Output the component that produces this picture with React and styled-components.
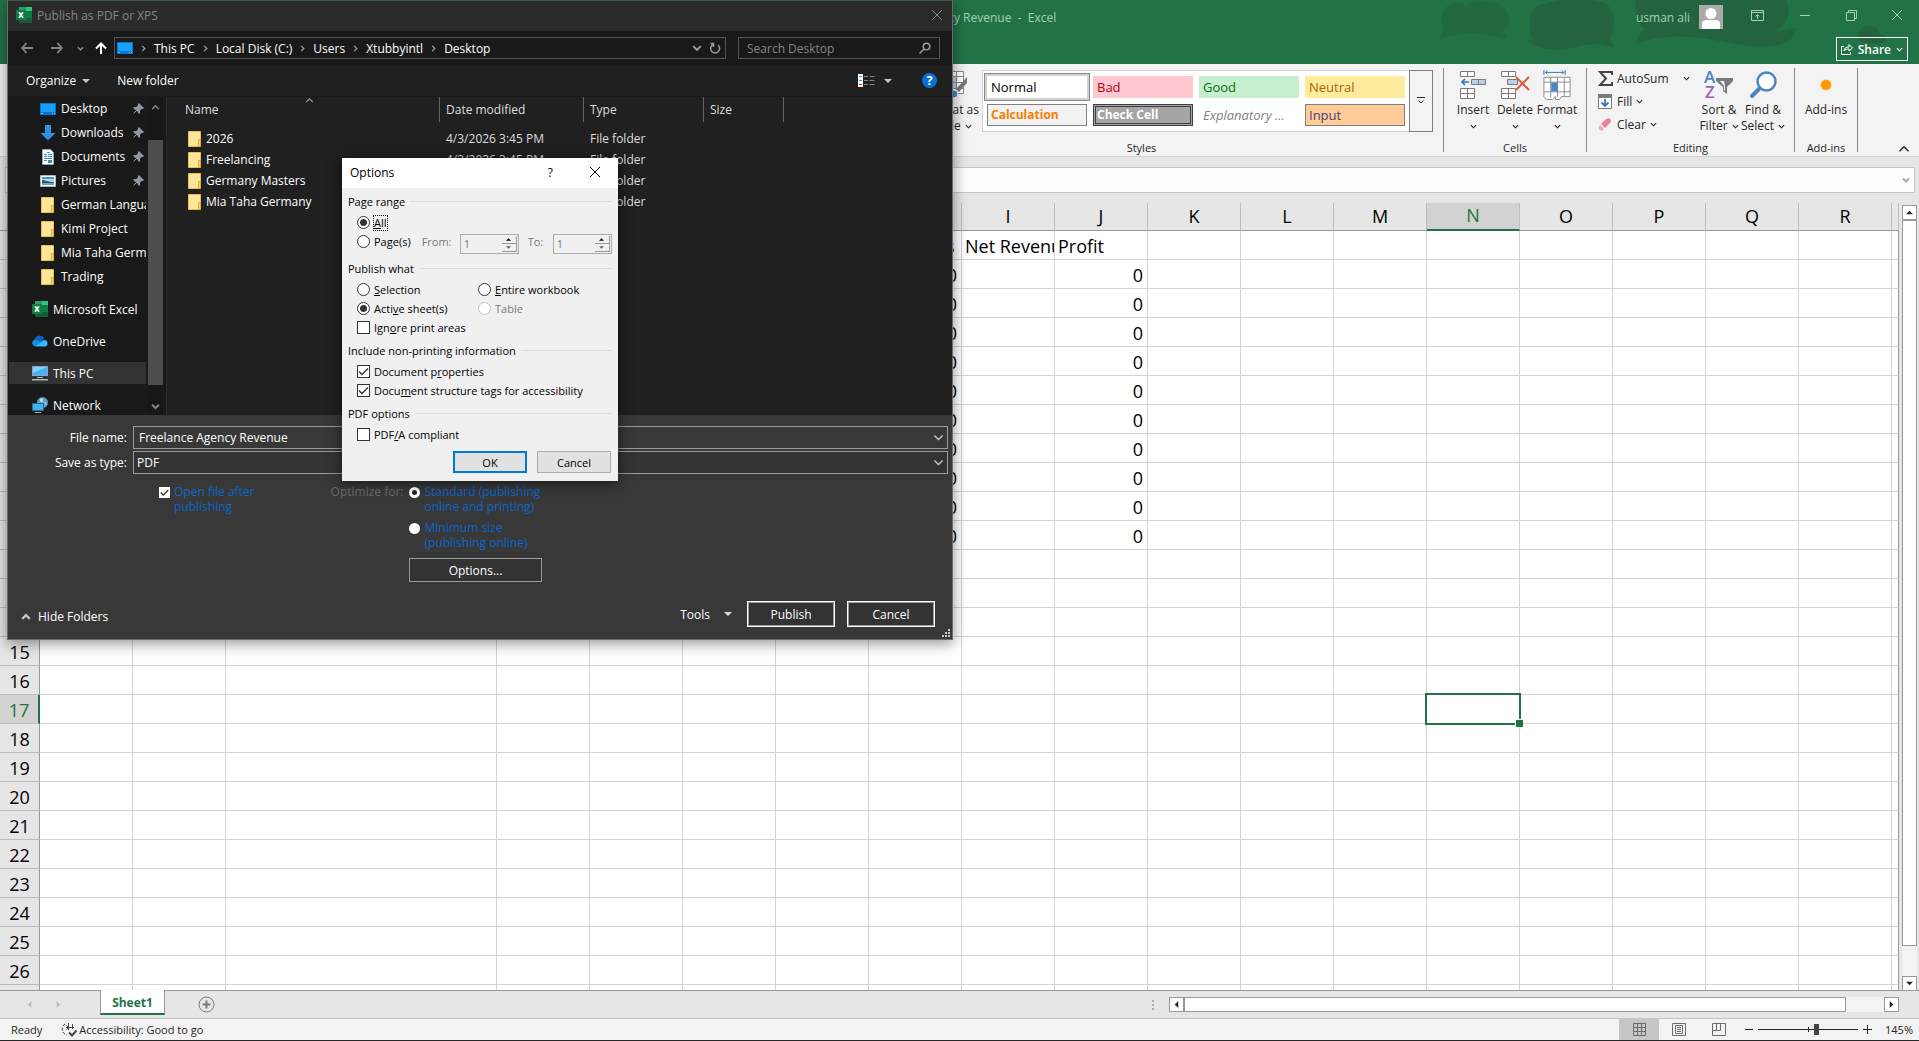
import React, { useState } from 'react';
import styled, { createGlobalStyle, css } from 'styled-components';

const GlobalStyle=createGlobalStyle`
    *{
        box-sizing: border-box;
    }
    body{
        margin: 0;
        overflow: hidden;
        font-family: "Open Sans", "Noto Sans", sans-serif;
        font-size: 12px;
        color: #262626;
    }
    button, input, select{
        font: inherit;
        color: inherit;
        margin: 0;
        padding: 0;
        border: none;
        border-radius: 0;
        background: none;
        outline: none;
    }
    svg{
        display: block;
        flex: none;
    }
`

/* ---------- workbook window ---------- */

const Page=styled.div`
    display: flex;
    flex-direction: column;
    height: 100vh;
    background-color: #e6e6e6;
`
const TitleBar=styled.header`
    position: relative;
    display: grid;
    grid-template-columns: 1fr auto 1fr;
    grid-template-rows: 34px 30px;
    background-color: #217346;
    color: #a6cfb5;
    white-space: pre;
`
const Clouds=styled.svg`
    position: absolute;
    right: 0;
    top: 0;
`
const DocTitle=styled.div`
    grid-column: 2;
    line-height: 36px;
`
const Account=styled.div`
    position: relative;
    display: flex;
    justify-content: flex-end;
    align-items: center;
    padding-right: 17px;
`
const Avatar=styled.svg`
    margin: 0 28px 0 9px;
`
const WindowButtons=styled.div`
    display: flex;
    gap: 35px;
    padding-bottom: 4px;
`
const IconButton=styled.button`
    display: flex;
    align-items: center;
    justify-content: center;
`
const ShareRow=styled.div`
    position: relative;
    grid-column: 3;
    display: flex;
    justify-content: flex-end;
    padding: 3px 11px;
`
const ShareButton=styled.button`
    display: flex;
    align-items: center;
    gap: 5px;
    height: 24px;
    padding: 0 4px;
    border: 1px solid white;
    color: white;
    font-weight: 600;
`
const Ribbon=styled.div`
    display: flex;
    justify-content: flex-end;
    height: 93px;
    padding: 4px 9px 4px 0;
    background-color: #f3f3f3;
    border-bottom: 1px solid #d2d2d2;
`
const Group=styled.section`
    display: flex;
    flex-direction: column;
    justify-content: space-between;
    width: ${p=>p.$width}px;
    border-right: 1px solid #8a8a8a;
`
const GroupBody=styled.div`
    display: flex;
    justify-content: ${p=>p.$align || 'center'};
    padding: ${p=>p.$pad || '0'};
`
const GroupLabel=styled.div`
    text-align: center;
    font-size: 11px;
    line-height: 14px;
    margin-bottom: -3px;
`
const BigButton=styled.button`
    display: flex;
    flex-direction: column;
    align-items: center;
    width: ${p=>p.$width || 42}px;
    line-height: 16px;
    white-space: nowrap;
    svg.big{
        margin: 2px 0;
    }
    span{
        display: flex;
        align-items: center;
        gap: 4px;
        min-height: 16px;
    }
`
const SmallButtons=styled.div`
    display: flex;
    flex-direction: column;
    width: 92px;
    margin-right: 7px;
`
const SmallButton=styled.button`
    display: flex;
    align-items: center;
    gap: 4px;
    height: 23px;
    padding-bottom: 2px;
    svg:last-child{
        margin-left: ${p=>p.$wide ? 'auto' : '0'};
    }
`
const Gallery=styled.div`
    display: flex;
    height: 62px;
    margin-top: 2px;
    background-color: white;
    border: 1px solid #d2d2d2;
    border-right: none;
`
const Swatches=styled.div`
    display: grid;
    grid-template-columns: repeat(4, 100px);
    grid-auto-rows: 22px;
    gap: 6px;
    padding: 5px 4px;
`
const Swatch=styled.button`
    padding: 0 0 1px 3px;
    text-align: left;
    font-size: 13px;
    line-height: 18px;
    white-space: nowrap;
    color: ${p=>p.$color};
    background-color: ${p=>p.$bg};
    border: 1px solid ${p=>p.$edge || p.$bg};
    ${p=>p.$bold && css`
        font-weight: 700;
        font-size: 12px;
    `}
    ${p=>p.$italic && css`
        font-style: italic;
    `}
    ${p=>p.$double && css`
        border: 3px double #3f3f3f;
        padding-left: 1px;
        line-height: 14px;
    `}
    ${p=>p.$selected && css`
        box-shadow: 0 0 0 2px #d2d2d2, 0 0 0 3px #8a8a8a;
    `}
`
const GalleryMore=styled.button`
    display: flex;
    align-items: center;
    justify-content: center;
    width: 24px;
    margin: -1px 0;
    border: 1px solid #7f7f7f;
    background-color: #f3f3f3;
`
const Collapse=styled.button`
    align-self: flex-end;
    width: 52px;
    display: flex;
    justify-content: flex-end;
    margin-bottom: -3px;
`
const FormulaRow=styled.div`
    display: flex;
    height: 46px;
    padding: 10px 4px;
`
const FormulaBox=styled.div`
    display: flex;
    align-items: center;
    flex: 1;
    margin-left: 1px;
    padding-right: 4px;
    background-color: #fdfdfd;
    border: 1px solid #c6c6c6;
    input{
        flex: 1;
    }
`
const GridArea=styled.div`
    display: flex;
    flex: 1;
    min-height: 0;
`
const SheetBox=styled.div`
    position: relative;
    flex: 1;
    min-width: 0;
    overflow: hidden;
`
const Sheet=styled.table`
    width: 100%;
    table-layout: fixed;
    border-collapse: separate;
    border-spacing: 0;
    font-size: 18px;
    color: black;
`
const ColHead=styled.th`
    height: 28px;
    padding: 0 0 2px;
    font-weight: 400;
    line-height: 24px;
    color: ${p=>p.$active ? '#217346' : 'black'};
    background-color: ${p=>p.$active ? '#d2d2d2' : '#e6e6e6'};
    border-right: 1px solid #bdbdbd;
    border-bottom: ${p=>p.$active ? '2px solid #217346' : '1px solid #999999'};
`
const RowHead=styled.th`
    height: 29px;
    padding: 2px 0 0;
    font-weight: 400;
    line-height: 26px;
    color: ${p=>p.$active ? '#217346' : 'black'};
    background-color: ${p=>p.$active ? '#d2d2d2' : '#e6e6e6'};
    border-right: ${p=>p.$active ? '2px solid #217346' : '1px solid #999999'};
    border-bottom: 1px solid #bdbdbd;
`
const Cell=styled.td`
    position: relative;
    height: 29px;
    padding: 2px 4px 0 3px;
    line-height: 26px;
    white-space: nowrap;
    overflow: ${p=>p.$selected ? 'visible' : 'hidden'};
    text-align: ${p=>p.$number ? 'right' : 'left'};
    background-color: white;
    border-right: 1px solid #d4d4d4;
    border-bottom: 1px solid #d4d4d4;
    &:last-child{
        border-right-color: #999999;
    }
    ${p=>p.$selected && css`
        z-index: 1;
        &::before{
            content: '';
            position: absolute;
            inset: -2px;
            border: 2px solid #217346;
        }
        &::after{
            content: '';
            position: absolute;
            right: -4px;
            bottom: -4px;
            width: 7px;
            height: 7px;
            border: 1px solid white;
            border-width: 1px 0 0 1px;
            background-color: #217346;
        }
    `}
`
const VScroll=styled.div`
    display: flex;
    flex-direction: column;
    width: 15px;
    margin: 2px 2px -1px 3px;
    background-color: #f3f3f3;
`
const VThumb=styled.div`
    flex: 726;
    background-color: white;
    border: 1px solid #999999;
`
const VRest=styled.div`
    flex: 30;
`
const ScrollButton=styled.button`
    display: flex;
    align-items: center;
    justify-content: center;
    width: 15px;
    height: 15px;
    background-color: white;
    border: 1px solid #999999;
`
const TabBar=styled.div`
    display: flex;
    align-items: center;
    height: 28px;
    padding-right: 20px;
    border-top: 1px solid #999999;
`
const TabArrows=styled.div`
    display: flex;
    gap: 22px;
    width: 100px;
    padding-left: 26px;
`
const Tab=styled.button`
    align-self: flex-start;
    width: 65px;
    height: 25px;
    margin: -1px 33px 0 0;
    padding-top: 2px;
    background-color: white;
    border: 1px solid #999999;
    border-top: none;
    border-bottom: 2px solid #217346;
    color: #217346;
    font-weight: 700;
`
const Dots=styled.div`
    display: grid;
    gap: 2px;
    margin: 0 15px 0 auto;
    i{
        width: 2px;
        height: 2px;
        background-color: #ababab;
    }
`
const HScroll=styled.div`
    display: flex;
    width: 730px;
    height: 15px;
    background-color: #f3f3f3;
`
const HThumb=styled.div`
    flex: 662;
    background-color: white;
    border: 1px solid #999999;
`
const HRest=styled.div`
    flex: 38;
`
const StatusBar=styled.footer`
    display: flex;
    align-items: center;
    height: 23px;
    padding: 0 6px 0 11px;
    font-size: 11px;
    background-color: #f3f3f3;
    border-top: 1px solid #c6c6c6;
    border-bottom: 1px solid #262626;
`
const Accessibility=styled.div`
    display: flex;
    align-items: center;
    gap: 2px;
    margin: 0 auto 0 19px;
`
const ViewButton=styled.button`
    display: flex;
    align-items: center;
    justify-content: center;
    width: 40px;
    height: 21px;
    background-color: ${p=>p.$active ? '#c6c6c6' : 'transparent'};
`
const Zoom=styled.div`
    display: flex;
    align-items: center;
    gap: 5px;
    margin: 0 13px 0 6px;
    input{
        appearance: none;
        width: 100px;
        height: 11px;
        background: linear-gradient(#262626, #262626) 50px 3px / 1px 5px no-repeat,
            linear-gradient(#262626, #262626) 0 5px / 100% 1px no-repeat;
    }
    input::-webkit-slider-thumb{
        appearance: none;
        width: 5px;
        height: 11px;
        background-color: #444444;
    }
`

/* ---------- publish dialog ---------- */

const Publish=styled.div`
    position: absolute;
    left: 7px;
    top: 0;
    width: 946px;
    display: flex;
    flex-direction: column;
    border: 1px solid #6b6b6b;
    border-top-color: #3b5a49;
    background-color: #383838;
    color: white;
    box-shadow: 0 3px 14px rgba(0, 0, 0, 0.45);
`
const DialogTitle=styled.div`
    display: flex;
    align-items: center;
    gap: 5px;
    height: 30px;
    padding: 0 10px 2px 8px;
    background-color: #2b2b2b;
    color: #858585;
    button{
        margin-left: auto;
    }
`
const NavRow=styled.div`
    display: flex;
    align-items: center;
    height: 35px;
    padding: 0 12px 1px;
    background-color: #191919;
`
const NavButtons=styled.div`
    display: grid;
    grid-template-columns: 30px 26px 18px 20px;
    align-items: center;
    justify-items: start;
    padding-left: 1px;
    margin-right: -1px;
`
const Address=styled.div`
    display: flex;
    align-items: center;
    flex: 1;
    height: 22px;
    gap: 7px;
    padding: 0 4px 0 2px;
    border: 1px solid #535353;
    a{
        color: white;
        text-decoration: none;
    }
    .drop{
        margin-left: auto;
    }
`
const Search=styled.label`
    display: flex;
    align-items: center;
    width: 202px;
    height: 22px;
    margin-left: 12px;
    padding: 0 8px;
    border: 1px solid #535353;
    input{
        flex: 1;
        min-width: 0;
    }
    input::placeholder{
        color: #858585;
    }
`
const Commands=styled.div`
    display: flex;
    align-items: center;
    height: 31px;
    padding: 0 15px 1px 18px;
    background-color: #202020;
    border-bottom: 1px solid #191919;
`
const Command=styled.button`
    display: flex;
    align-items: center;
    gap: ${p=>p.$inner || 6}px;
    margin-right: ${p=>p.$push ? 'auto' : `${p.$gap || 0}px`};
`
const Browser=styled.div`
    display: flex;
    height: 318px;
    background-color: #202020;
`
const Sidebar=styled.nav`
    display: flex;
    gap: 2px;
    width: 159px;
    overflow: hidden;
    background-color: #191919;
    border-right: 1px solid #2b2b2b;
`
const Places=styled.div`
    width: 138px;
    overflow: hidden;
    padding-left: 1px;
    a{
        display: flex;
        align-items: center;
        gap: 5px;
        height: 24px;
        padding: 0 0 1px 31px;
        color: white;
        white-space: nowrap;
        text-decoration: none;
    }
    a svg:first-child{
        width: 16px;
    }
    a svg:nth-of-type(2){
        margin-left: auto;
        margin-right: 2px;
    }
`
const Roots=styled.div`
    display: grid;
    gap: 10px;
    margin-top: 9px;
    a{
        height: 22px;
        padding: 0 0 0 23px;
    }
    a.current{
        background-color: #333333;
    }
`
const SideScroll=styled.div`
    display: flex;
    flex-direction: column;
    align-items: center;
    width: 15px;
    padding: 6px 0 4px;
    background-color: #171717;
`
const SideThumb=styled.div`
    width: 15px;
    height: 245px;
    margin-top: 28px;
    margin-bottom: auto;
    background-color: #4d4d4d;
`
const FileTable=styled.table`
    table-layout: fixed;
    width: 618px;
    align-self: flex-start;
    margin-left: -1px;
    border-spacing: 0;
    color: #dedede;
    thead th{
        position: relative;
        height: 25px;
        padding: 0 0 0 6px;
        font-weight: 400;
        text-align: left;
        border-right: 1px solid #636363;
    }
    thead th:first-child{
        padding-left: 19px;
    }
    thead svg{
        position: absolute;
        left: 139px;
        top: -1px;
    }
    tbody::before{
        content: '';
        display: block;
        height: 6px;
    }
    td{
        height: 21px;
        padding: 0 0 0 6px;
        white-space: nowrap;
    }
    td:first-child{
        padding-left: 21px;
        color: white;
    }
`
const FileName=styled.span`
    display: flex;
    align-items: center;
    gap: 3px;
`
const SaveFields=styled.div`
    display: grid;
    grid-template-columns: 119px 1fr;
    gap: 2px 6px;
    padding: 11px 4px 0 0;
    align-items: center;
    >label{
        text-align: right;
    }
`
const SaveField=styled.div`
    display: flex;
    align-items: center;
    height: 23px;
    padding-right: 3px;
    border: 1px solid #9b9b9b;
    background-color: ${p=>p.$dark ? '#333333' : '#383838'};
    input, select{
        flex: 1;
        appearance: none;
        padding-left: ${p=>p.$dark ? 3 : 5}px;
    }
`
const PublishOptions=styled.div`
    display: flex;
    height: 84px;
    padding: 10px 0 0 151px;
    line-height: 15px;
    color: #0a66cc;
    label{
        display: flex;
        gap: 4px;
    }
    input{
        flex: none;
        appearance: none;
        width: 11px;
        height: 11px;
        margin-top: 3px;
        background-color: white;
    }
    input[type=radio]{
        border-radius: 50%;
    }
    input[type=radio]:checked{
        border: 3px solid white;
        background-color: #262626;
    }
`
const TickBox=styled.span`
    display: grid;
    height: 15px;
    svg, input{
        grid-area: 1 / 1;
    }
    svg{
        position: relative;
        margin-top: 3px;
        pointer-events: none;
    }
`
const OptimizeLabel=styled.span`
    width: 74px;
    margin-left: 75px;
    margin-right: 6px;
    text-align: right;
    white-space: nowrap;
    color: #6b6b6b;
`
const OptimizeChoices=styled.div`
    display: grid;
    gap: 6px;
    align-content: start;
`
const DarkButton=styled.button`
    width: ${p=>p.$width}px;
    height: ${p=>p.$height}px;
    background-color: #333333;
    border: 1px solid ${p=>p.$strong ? 'white' : '#9b9b9b'};
    box-shadow: ${p=>p.$strong ? 'inset 0 0 0 1px #9b9b9b' : 'none'};
`
const OptionsRow=styled.div`
    display: flex;
    padding-left: 401px;
`
const PublishFooter=styled.div`
    display: flex;
    align-items: center;
    padding: 19px 17px 12px 13px;
    .hide{
        margin-right: auto;
        padding-top: 5px;
    }
`
const Grip=styled.svg`
    position: absolute;
    right: 2px;
    bottom: 2px;
`

/* ---------- options dialog ---------- */

const Options=styled.div`
    position: absolute;
    left: 342px;
    top: 158px;
    width: 276px;
    font-size: 11px;
    color: black;
    background-color: #f0f0f0;
    box-shadow: 0 2px 12px rgba(0, 0, 0, 0.6);
`
const OptionsTitle=styled.div`
    display: flex;
    align-items: center;
    height: 30px;
    padding: 0 18px 2px 8px;
    font-size: 12px;
    background-color: white;
    span{
        margin-right: auto;
    }
    button+button{
        margin-left: 37px;
    }
`
const OptionsBody=styled.div`
    padding: 3px 6px 8px;
`
const Section=styled.section`
    margin-bottom: ${p=>p.$gap || 3}px;
`
const SectionTitle=styled.div`
    display: flex;
    align-items: center;
    gap: 5px;
    height: 22px;
    padding-bottom: 1px;
    &::after{
        content: '';
        flex: 1;
        border-top: 1px solid #dcdcdc;
    }
`
const Choices=styled.div`
    display: grid;
    grid-template-columns: ${p=>p.$two ? '121px 1fr' : '1fr'};
    padding-left: 9px;
`
const Choice=styled.label`
    display: flex;
    align-items: center;
    gap: 4px;
    height: 19px;
    white-space: nowrap;
    color: ${p=>p.$off ? '#7a7a7a' : 'black'};
    input{
        appearance: none;
        grid-area: 1 / 1;
        width: 13px;
        height: 13px;
        background-color: white;
        border: 1px solid ${p=>p.$off ? '#c6c6c6' : '#333333'};
    }
    input[type=radio]{
        border-radius: 50%;
    }
    input[type=radio]:checked{
        background: radial-gradient(circle, #333333 3px, white 4px);
    }
    >span.focus{
        outline: 1px dotted black;
        line-height: 14px;
    }
`
const CheckWrap=styled.span`
    display: grid;
    svg{
        grid-area: 1 / 1;
        pointer-events: none;
    }
`
const PageRow=styled.div`
    display: flex;
    align-items: center;
    height: 19px;
    color: #7a7a7a;
`
const PageLabel=styled.label`
    margin-left: ${p=>p.$gap}px;
    width: ${p=>p.$width}px;
    flex: none;
`
const Spin=styled.div`
    display: flex;
    flex: none;
    width: 59px;
    height: 20px;
    margin-top: 4px;
    padding: 1px;
    border: 1px solid #ababab;
    background-color: #f0f0f0;
    input{
        flex: 1;
        min-width: 0;
        padding-left: 2px;
    }
`
const SpinButtons=styled.div`
    display: grid;
    grid-template-rows: 8px 8px;
    width: 15px;
    button{
        display: flex;
        align-items: center;
        justify-content: center;
        border-right: 1px solid #999999;
        border-bottom: 1px solid #999999;
    }
`
const OptionsButtons=styled.div`
    display: flex;
    justify-content: flex-end;
    gap: 10px;
    margin-top: 7px;
    padding-right: 1px;
`
const LightButton=styled.button`
    width: 74px;
    height: 22px;
    background-color: #e1e1e1;
    border: ${p=>p.$primary ? '2px solid #0078d7' : '1px solid #adadad'};
`

/* ---------- icons ---------- */

const Chevron=({ size=7, color='currentColor', dir='down', width=1.3, className })=>(
    <svg className={className} width={size} height={size} viewBox="0 0 8 8" fill="none" stroke={color} strokeWidth={width}
        transform={`rotate(${{ down: 0, up: 180, left: 90, right: -90 }[dir]})`}>
        <path d="M1 2.5l3 3 3-3" />
    </svg>
)
const Triangle=({ w=10, color='#262626', dir='down' })=>(
    <svg width={w} height={w} viewBox="0 0 10 10" fill={color} transform={`rotate(${{ down: 0, up: 180, left: 90, right: -90 }[dir]})`}>
        <path d="M0 2.5h10l-5 5z" />
    </svg>
)
const Cross=({ size=10, color='currentColor' })=>(
    <svg width={size} height={size} viewBox="0 0 10 10" stroke={color}>
        <path d="M0 0l10 10M10 0L0 10" />
    </svg>
)
const Tick=({ size })=>(
    <svg width={size} height={size} viewBox="0 0 13 13" fill="none" stroke="#333333" strokeWidth="1.4">
        <path d="M2 6.5l3 3 6-6" />
    </svg>
)
const ExcelIcon=()=>(
    <svg width="16" height="16" viewBox="0 0 16 16">
        <path fill="#21a366" d="M3 0h7v5H3z" />
        <path fill="#33c481" d="M10 0h6v4h-6z" />
        <path fill="#107c41" d="M3 5h7v6H3zM10 4h6v4h-6z" />
        <path fill="#185c37" d="M3 8h13v8H3z" />
        <path fill="#107c41" d="M0 3h10v10H0zM10 8h6v3h-6z" />
        <path stroke="white" strokeWidth="1.7" d="M3 5.3l4 5.4M7 5.3l-4 5.4" />
    </svg>
)
const DesktopIcon=()=>(
    <svg width="16" height="12" viewBox="0 0 16 12">
        <path fill="#0078d7" d="M0 0h16v12H0z" />
        <path fill="#1a9fff" d="M1 1h14v8H1z" />
        <path fill="#62c3ff" d="M1 10h2v1H1zM12 10h1v1h-1zM14 10h1v1h-1z" />
    </svg>
)
const DownloadIcon=()=>(
    <svg width="16" height="16" viewBox="0 0 16 16">
        <path fill="#2f8fe0" d="M5 0h6v8h4.500L8 15.500.5 8H5z" />
    </svg>
)
const DocumentIcon=()=>(
    <svg width="16" height="16" viewBox="0 0 16 16">
        <path fill="white" stroke="#9aa5ad" d="M2.500.5h8l3 3v12h-11z" />
        <path stroke="#2f8fe0" d="M7 3.500h3M4 5.500h3M8 5.500h4M4 7.500h3M8 7.500h4M4 9.500h8M4 11.500h3" />
        <path fill="#3f8f9c" d="M8 11h4v3H8z" />
    </svg>
)
const PictureIcon=()=>(
    <svg width="16" height="12" viewBox="0 0 16 12">
        <path fill="white" stroke="#b5b5b5" d="M.5.5h15v11H.5z" />
        <path fill="#4a90d9" d="M2 2h12v4H2z" />
        <path fill="#b7d6ea" d="M2 4h12v3H2z" />
        <path fill="#2d5a4d" d="M2 5c3 0 5 2 12 2v2H2z" />
        <path fill="#6aa6b8" d="M2 8h12v2H2z" />
    </svg>
)
const FolderIcon=()=>(
    <svg width="16" height="16" viewBox="0 0 14 16">
        <path fill="#ffe59a" stroke="#eac14d" d="M.5.5h12v8h-1v7H.5z" />
        <path fill="#f6d26b" stroke="#e0b03c" d="M10.500 8.500h2v7h-2z" />
    </svg>
)
const PinIcon=()=>(
    <svg width="11" height="11" viewBox="0 0 11 11" fill="#8e99a5" stroke="#8e99a5">
        <path stroke="none" d="M6 0l5 5-1 1-1-.3-2 2L7 10 6 11 3.500 7.500 0 5l1-1 2.300 0 2-2L5 1z" />
        <path d="M4 7l-3.500 3.500" />
    </svg>
)
const CloudIcon=()=>(
    <svg width="16" height="12" viewBox="0 0 16 12">
        <path fill="#0f5fc4" d="M4 10a4 4 0 01-1-6.500A5 5 0 0112 3l-3 6z" />
        <path fill="#1490df" d="M3 11a3 3 0 01.5-6c2.500-.5 4 1 6 3l2 3z" />
        <path fill="#35b6ff" d="M3 11.500L12 5a3.300 3.300 0 011 6.500z" />
    </svg>
)
const ComputerIcon=()=>(
    <svg width="16" height="15" viewBox="0 0 16 15">
        <path fill="#8fa3b0" d="M0 0h16v10H0z" />
        <path fill="#3fb4f4" d="M1 1h14v8H1z" />
        <path fill="#7cd0fb" d="M1 1h14L1 7z" />
        <path fill="#a9b7c0" d="M5 11h6v1H5zM0 13h16v1.500H0z" />
    </svg>
)
const NetworkIcon=()=>(
    <svg width="16" height="16" viewBox="0 0 16 16">
        <circle cx="10.500" cy="5.500" r="5.500" fill="#5b9fc0" />
        <path fill="#bfe3ee" d="M8 2c2-2 4 0 3 2s-3 2-3-2zM12 5c2 0 3 1 2 3z" />
        <path fill="#3fb4f4" stroke="#2b6a8e" d="M.5 6.500h11v7H.5z" />
        <path fill="#a9b7c0" d="M3 15h6v1H3z" />
    </svg>
)
const Arrow=({ flip, color='#858585' })=>(
    <svg width="12" height="12" viewBox="0 0 12 12" fill="none" stroke={color} strokeWidth="1.800" transform={flip ? 'rotate(180)' : undefined}>
        <path d="M5.500 1L1.200 6l4.300 5M1 6h11" />
    </svg>
)
const InsertIcon=()=>(
    <svg className="big" width="28" height="30" viewBox="0 0 28 30" fill="white" stroke="#7a7a7a">
        <path d="M1.500 1.500h14v5h-14zM8.500 1.500v5M1.500 18.500h14v10h-14zM1.500 23.500h14M8.500 18.500v10" />
        <path fill="#b9d0e8" d="M12.500 9.500h14v5h-14zM19.500 9.500v5" />
        <path fill="none" stroke="#2e75b6" strokeWidth="1.600" d="M6 9l-3 3 3 3M3 12h7" />
    </svg>
)
const DeleteIcon=()=>(
    <svg className="big" width="30" height="30" viewBox="0 0 30 30" fill="white" stroke="#7a7a7a">
        <path d="M1.500 1.500h14v5h-14zM8.500 1.500v5M1.500 18.500h14v10h-14zM1.500 23.500h14M8.500 18.500v10" />
        <path fill="#b9d0e8" d="M7.500 9.500h10v5h-10z" />
        <path fill="none" stroke="#e0593b" strokeWidth="2" d="M16 7l13 13M29 7L16 20" />
    </svg>
)
const FormatIcon=()=>(
    <svg className="big" width="28" height="30" viewBox="0 0 28 31" fill="white" stroke="#8a8a8a">
        <path d="M.5 7.500h27v20h-9l-2 3h-4v-3l-3 3h-6l-3-3z" />
        <path fill="none" d="M7.500 7.500v21M14.500 7.500v20M21.500 7.500v20M.5 12.500h27M.5 22.500h27" />
        <path stroke="none" fill="#4a86c5" d="M8 13h7v9H8z" />
        <path fill="none" stroke="#2e75b6" d="M.5 0v5M22.500 0v5M2 2.500h19M4 .5l-2 2 2 2M19 .5l2 2-2 2" />
    </svg>
)
const FormatTableIcon=()=>(
    <svg className="big" width="34" height="30" viewBox="0 0 34 30" fill="white" stroke="#8a8a8a">
        <path d="M.5 1.500h29v22H.5z" />
        <path stroke="none" fill="#b9d0e8" d="M8 7h15v12H8z" />
        <path fill="none" d="M.5 6.500h29M.5 12.500h29M.5 18.500h29M7.500 1.500v22M15.500 1.500v22M22.500 1.500v22" />
        <path stroke="none" fill="#7a7a7a" d="M33 7v6l-8 9-3-3z" />
        <circle cx="20" cy="24" r="4" fill="#4a86c5" stroke="white" />
    </svg>
)
const SortIcon=()=>(
    <svg className="big" width="30" height="30" viewBox="0 0 30 30" fontSize="17" fontWeight="600">
        <text x="0" y="13" fill="#4a86c5">A</text>
        <text x="1" y="28" fill="#9b62b8">Z</text>
        <path fill="#7a7a7a" d="M12 8h17v3l-6 6v7l-4-3v-4l-7-6z" />
        <path fill="#f3f3f3" d="M16 11h4l1 5v5l-1-1v-4z" />
    </svg>
)
const FindIcon=()=>(
    <svg className="big" width="28" height="30" viewBox="0 0 28 30">
        <circle cx="17.500" cy="11.500" r="9" fill="white" stroke="#4a86c5" strokeWidth="2.500" />
        <path stroke="#4a86c5" strokeWidth="4" strokeLinecap="round" d="M10.500 18.500L3 26" />
    </svg>
)
const SunIcon=()=>(
    <svg className="big" width="30" height="30" viewBox="0 0 30 30">
        <circle cx="15" cy="15" r="6" fill="#ffd9a0" />
        <circle cx="15" cy="15" r="5" fill="#ff9800" />
    </svg>
)
const SumIcon=()=>(
    <svg width="15" height="15" viewBox="0 0 15 15" fill="none" stroke="#444444" strokeWidth="2">
        <path d="M14 4V1H2l6 6.500L2 14h12v-3" />
    </svg>
)
const FillIcon=()=>(
    <svg width="15" height="15" viewBox="0 0 15 15" fill="white" stroke="#7a7a7a">
        <path d="M.5.5h13v14H.5z" />
        <path fill="#7a7a7a" d="M.5.5h13v3H.5z" />
        <path fill="none" stroke="#2e75b6" strokeWidth="1.800" d="M7 5v7M3.500 8.500L7 12l3.500-3.500" />
    </svg>
)
const EraserIcon=()=>(
    <svg width="15" height="15" viewBox="0 0 15 15">
        <path fill="#e8849a" d="M8 2l4-1 1 4-6 6-4-4z" />
        <path fill="#f0a5b4" d="M2 8l4 4-2 1.500H2L.5 11z" />
    </svg>
)

/* ---------- data ---------- */

const columns=['A','B','C','D','E','F','G','H','I','J','K','L','M','N','O','P','Q','R','']
const rows=Array.from({ length: 27 }, (_, i)=>i+1)
const headings={ H: 'Payments', I: 'Net Revenue', J: 'Profit' }

const cellValue=(col, row)=>{
    if(row===1) return headings[col] || ''
    if(row<=11 && (col==='H' || col==='J')) return 0
    return ''
}

const styleSwatches=[
    { name: 'Normal', color: 'black', bg: 'white', selected: true },
    { name: 'Bad', color: '#b0061a', bg: '#ffc7ce' },
    { name: 'Good', color: '#0b6b12', bg: '#c6efce' },
    { name: 'Neutral', color: '#a5640c', bg: '#ffeb9c' },
    { name: 'Calculation', color: '#fa7d00', bg: '#f2f2f2', edge: '#7f7f7f', bold: true },
    { name: 'Check Cell', color: 'white', bg: '#a5a5a5', bold: true, double: true },
    { name: 'Explanatory ...', color: '#7f7f7f', bg: 'white', italic: true },
    { name: 'Input', color: '#3f3f76', bg: '#ffcc99', edge: '#7f7f7f' },
]
const quickPlaces=[
    { name: 'Desktop', Icon: DesktopIcon, pin: true },
    { name: 'Downloads', Icon: DownloadIcon, pin: true },
    { name: 'Documents', Icon: DocumentIcon, pin: true },
    { name: 'Pictures', Icon: PictureIcon, pin: true },
    { name: 'German Language', Icon: FolderIcon },
    { name: 'Kimi Project', Icon: FolderIcon },
    { name: 'Mia Taha Germany', Icon: FolderIcon },
    { name: 'Trading', Icon: FolderIcon },
]
const rootPlaces=[
    { name: 'Microsoft Excel', Icon: ExcelIcon },
    { name: 'OneDrive', Icon: CloudIcon },
    { name: 'This PC', Icon: ComputerIcon, current: true },
    { name: 'Network', Icon: NetworkIcon },
]
const folders=['2026', 'Freelancing', 'Germany Masters', 'Mia Taha Germany']
const crumbs=['This PC', 'Local Disk (C:)', 'Users', 'Xtubbyintl', 'Desktop']

/* ---------- components ---------- */

const Header=()=>(
    <TitleBar>
        <Clouds width="499" height="64" viewBox="0 0 499 64" fill="#23633f">
            <path opacity=".6" d="M21 20c0-14 14-22 26-14 8-8 36-6 40 6 6 12 0 18-6 20 4 4 8 4 5 7-20-4-40-10-66 0 0-6 6-8 4-10z" />
            <path d="M110 30c-2-18 6-28 16-26 14-6 50-6 60 0 10 8 10 24 4 34l4 10c-14-6-22-4-34-2-14 4-36 8-54-6 4 0 6 0 8 0-4-4-4-6-4-10z" />
            <path d="M216 0h150c6 14 0 26-10 30 6 2 14-2 20-2-2 18-24 20-46 18-34-4-70-18-114-2 2-10 6-14 10-14-10-8-12-20-10-30z" />
            <path d="M438 36c0-12 18-14 22-2 6 0 8 6 4 8-8 4-26 2-26-6z" />
        </Clouds>
        <DocTitle>Freelance Agency Revenue  -  Excel</DocTitle>
        <Account>
            usman ali
            <Avatar width="24" height="24" viewBox="0 0 24 24">
                <path fill="#ababab" d="M0 0h24v24H0z" />
                <circle cx="12" cy="8.500" r="5.500" fill="white" />
                <path fill="white" d="M3 24v-5c0-3 2-4 5-4h8c3 0 5 1 5 4v5z" />
            </Avatar>
            <WindowButtons>
                <IconButton aria-label="Ribbon display options">
                    <svg width="13" height="11" viewBox="0 0 13 11" fill="none" stroke="currentColor">
                        <path d="M.5.5h12v10H.5zM.5 2.500h12M6.500 9V4.500M4.500 6.500l2-2 2 2" />
                    </svg>
                </IconButton>
                <IconButton aria-label="Minimize">
                    <svg width="12" height="11" viewBox="0 0 12 11" stroke="currentColor"><path d="M1 5.500h10" /></svg>
                </IconButton>
                <IconButton aria-label="Restore">
                    <svg width="11" height="11" viewBox="0 0 11 11" fill="none" stroke="currentColor">
                        <path d="M.5 2.500h8v8h-8zM2.500 2.500v-2h8v8h-2" />
                    </svg>
                </IconButton>
                <IconButton aria-label="Close"><Cross /></IconButton>
            </WindowButtons>
        </Account>
        <ShareRow>
            <ShareButton>
                <svg width="12" height="12" viewBox="0 0 12 12" fill="none" stroke="white">
                    <path d="M3 3.500H.5v8h9V9M3 8c0-3 2-4 5-4V1.500l3.500 3.500L8 8V6C6 6 4 6 3 8z" />
                </svg>
                Share
                <Chevron />
            </ShareButton>
        </ShareRow>
    </TitleBar>
)

const RibbonBar=()=>(
    <Ribbon>
        <Group $width={604}>
            <GroupBody $align="flex-end" $pad="0 10px 0 0">
                <BigButton $width={62}>
                    <FormatTableIcon />
                    <span>Format as</span>
                    <span>Table <Chevron /></span>
                </BigButton>
                <Gallery>
                    <Swatches>
                        {styleSwatches.map(s=>(
                            <Swatch key={s.name} $color={s.color} $bg={s.bg} $edge={s.edge} $bold={s.bold}
                                $italic={s.italic} $double={s.double} $selected={s.selected}>{s.name}</Swatch>
                        ))}
                    </Swatches>
                    <GalleryMore aria-label="More styles">
                        <svg width="8" height="8" viewBox="0 0 8 8" fill="none" stroke="#262626">
                            <path d="M0 .5h8M1.500 3.500L4 6l2.500-2.500" />
                        </svg>
                    </GalleryMore>
                </Gallery>
            </GroupBody>
            <GroupLabel>Styles</GroupLabel>
        </Group>
        <Group $width={143}>
            <GroupBody>
                <BigButton><InsertIcon /><span>Insert</span><span><Chevron /></span></BigButton>
                <BigButton><DeleteIcon /><span>Delete</span><span><Chevron /></span></BigButton>
                <BigButton><FormatIcon /><span>Format</span><span><Chevron /></span></BigButton>
            </GroupBody>
            <GroupLabel>Cells</GroupLabel>
        </Group>
        <Group $width={208}>
            <GroupBody $align="flex-start" $pad="0 0 0 11px">
                <SmallButtons>
                    <SmallButton $wide><SumIcon />AutoSum<Chevron /></SmallButton>
                    <SmallButton><FillIcon />Fill<Chevron /></SmallButton>
                    <SmallButton><EraserIcon />Clear<Chevron /></SmallButton>
                </SmallButtons>
                <BigButton $width={44}><SortIcon /><span>Sort &amp;</span><span>Filter <Chevron /></span></BigButton>
                <BigButton $width={44}><FindIcon /><span>Find &amp;</span><span>Select <Chevron /></span></BigButton>
            </GroupBody>
            <GroupLabel>Editing</GroupLabel>
        </Group>
        <Group $width={63}>
            <GroupBody><BigButton><SunIcon /><span>Add-ins</span></BigButton></GroupBody>
            <GroupLabel>Add-ins</GroupLabel>
        </Group>
        <Collapse aria-label="Collapse ribbon"><Chevron dir="up" size={12} width={1} /></Collapse>
    </Ribbon>
)

const Spreadsheet=()=>(
    <GridArea>
        <SheetBox>
            <Sheet>
                <colgroup>
                    <col width="40" />
                    {columns.map(c=><col key={c} width={c==='' ? undefined : c==='C' ? 271 : 93} />)}
                </colgroup>
                <thead>
                    <tr>
                        <ColHead />
                        {columns.map(c=><ColHead key={c} $active={c==='N'}>{c}</ColHead>)}
                    </tr>
                </thead>
                <tbody>
                    {rows.map(r=>(
                        <tr key={r}>
                            <RowHead $active={r===17}>{r}</RowHead>
                            {columns.map(c=>(
                                <Cell key={c} $number={r>1} $selected={c==='N' && r===17}>{cellValue(c, r)}</Cell>
                            ))}
                        </tr>
                    ))}
                </tbody>
            </Sheet>
        </SheetBox>
        <VScroll>
            <ScrollButton aria-label="Scroll up"><Triangle w={7} dir="up" /></ScrollButton>
            <VThumb />
            <VRest />
            <ScrollButton aria-label="Scroll down"><Triangle w={7} /></ScrollButton>
        </VScroll>
    </GridArea>
)

const SheetTabs=()=>(
    <TabBar>
        <TabArrows>
            <Triangle w={7} dir="left" color="#bdbdbd" />
            <Triangle w={7} dir="right" color="#bdbdbd" />
        </TabArrows>
        <Tab>Sheet1</Tab>
        <IconButton aria-label="New sheet">
            <svg width="17" height="17" viewBox="0 0 17 17" fill="none" stroke="#7a7a7a">
                <circle cx="8.500" cy="8.500" r="7.500" />
                <path strokeWidth="2" d="M4.500 8.500h8M8.500 4.500v8" />
            </svg>
        </IconButton>
        <Dots><i /><i /><i /></Dots>
        <HScroll>
            <ScrollButton aria-label="Scroll left"><Triangle w={7} dir="left" /></ScrollButton>
            <HThumb />
            <HRest />
            <ScrollButton aria-label="Scroll right"><Triangle w={7} dir="right" /></ScrollButton>
        </HScroll>
    </TabBar>
)

const Status=()=>{
    const [zoom,setZoom]=useState(59)
    return (
        <StatusBar>
            Ready
            <Accessibility>
                <svg width="16" height="15" viewBox="0 0 16 15" fill="none" stroke="#444444">
                    <path strokeDasharray="3 1.500" d="M4 2a6 6 0 002 11" />
                    <path d="M7.500 1v7M5 5.500h8M11.500 2v5M5.500 3.500l2 2-2 2" />
                    <path strokeWidth="2" d="M8 10.500l3 3 4.500-5" />
                </svg>
                Accessibility: Good to go
            </Accessibility>
            <ViewButton $active aria-label="Normal view">
                <svg width="13" height="13" viewBox="0 0 13 13" fill="none" stroke="#6b6b6b">
                    <path d="M.5.5h12v12H.5zM4.500.5v12M8.500.5v12M.5 4.500h12M.5 8.500h12" />
                </svg>
            </ViewButton>
            <ViewButton aria-label="Page layout view">
                <svg width="14" height="13" viewBox="0 0 14 13" fill="none" stroke="#6b6b6b">
                    <path d="M.5.5h13v12H.5zM3.500 2.500h7v8h-7zM5 4.500h4M5 6.500h4M5 8.500h4" />
                </svg>
            </ViewButton>
            <ViewButton aria-label="Page break view">
                <svg width="14" height="13" viewBox="0 0 14 13" fill="none" stroke="#6b6b6b">
                    <path d="M.5.5h13v12H.5zM.5 7.500h8v-7M4.500.5v7" />
                </svg>
            </ViewButton>
            <Zoom>
                <IconButton aria-label="Zoom out">
                    <svg width="8" height="9" viewBox="0 0 8 9" stroke="#262626"><path d="M0 4.500h8" /></svg>
                </IconButton>
                <input type="range" aria-label="Zoom" value={zoom} onChange={e=>setZoom(e.target.value)} />
                <IconButton aria-label="Zoom in">
                    <svg width="9" height="9" viewBox="0 0 9 9" stroke="#262626"><path d="M0 4.500h9M4.500 0v9" /></svg>
                </IconButton>
            </Zoom>
            145%
        </StatusBar>
    )
}

const PublishDialog=()=>(
    <Publish role="dialog" aria-label="Publish as PDF or XPS">
        <DialogTitle>
            <ExcelIcon />
            Publish as PDF or XPS
            <IconButton aria-label="Close"><Cross /></IconButton>
        </DialogTitle>
        <NavRow>
            <NavButtons>
                <IconButton aria-label="Back"><Arrow /></IconButton>
                <IconButton aria-label="Forward"><Arrow flip /></IconButton>
                <IconButton aria-label="Recent"><Chevron color="#858585" width={1.8} /></IconButton>
                <IconButton aria-label="Up">
                    <svg width="12" height="12" viewBox="0 0 12 12" fill="none" stroke="white" strokeWidth="2">
                        <path d="M1 6.500l5-5 5 5M6 1.500V12" />
                    </svg>
                </IconButton>
            </NavButtons>
            <Address>
                <DesktopIcon />
                {crumbs.map(c=>(
                    <React.Fragment key={c}>
                        <Chevron dir="right" color="#9b9b9b" width={1.5} />
                        <a href="#path">{c}</a>
                    </React.Fragment>
                ))}
                <Chevron className="drop" size={10} color="#9b9b9b" width={1.6} />
                <svg width="12" height="12" viewBox="0 0 12 12" fill="none" stroke="#9b9b9b" strokeWidth="1.500">
                    <path d="M9 3a4.500 4.500 0 11-5-.5M1.500 1.500h3v3.500" />
                </svg>
            </Address>
            <Search>
                <input placeholder="Search Desktop" aria-label="Search Desktop" />
                <svg width="12" height="12" viewBox="0 0 12 12" fill="none" stroke="#9b9b9b" strokeWidth="1.500">
                    <circle cx="7.500" cy="4.500" r="3.300" />
                    <path d="M5 7l-4.500 4.500" />
                </svg>
            </Search>
        </NavRow>
        <Commands>
            <Command $gap={27}>Organize <Triangle w={8} color="#c6c6c6" /></Command>
            <Command $push>New folder</Command>
            <Command $gap={30} $inner={9} aria-label="Change view">
                <svg width="17" height="13" viewBox="0 0 17 13" stroke="#858585">
                    <path fill="white" stroke="none" d="M0 0h5v13H0z" />
                    <path d="M6 2.500h4M11.500 2.500h5M6 6.500h4M11.500 6.500h5M6 10.500h4M11.500 10.500h5" />
                    <path stroke="none" fill="#2f8fe0" d="M1 2h3v1H1zM1 6h3v1H1z" />
                    <path stroke="none" fill="#d13438" d="M1 10h3v1H1z" />
                </svg>
                <Triangle w={8} color="#c6c6c6" />
            </Command>
            <IconButton aria-label="Help">
                <svg width="15" height="15" viewBox="0 0 15 15">
                    <circle cx="7.500" cy="7.500" r="7.500" fill="#0a6fd6" />
                    <text x="7.500" y="12" fill="white" fontSize="12" fontWeight="700" textAnchor="middle">?</text>
                </svg>
            </IconButton>
        </Commands>
        <Browser>
            <Sidebar>
                <Places>
                    {quickPlaces.map(({ name, Icon, pin })=>(
                        <a key={name} href="#place"><Icon />{name}{pin && <PinIcon />}</a>
                    ))}
                    <Roots>
                        {rootPlaces.map(({ name, Icon, current })=>(
                            <a key={name} href="#place" className={current ? 'current' : ''}><Icon />{name}</a>
                        ))}
                    </Roots>
                </Places>
                <SideScroll>
                    <Chevron dir="up" color="#858585" size={9} />
                    <SideThumb />
                    <Chevron color="#858585" size={9} width={1.8} />
                </SideScroll>
            </Sidebar>
            <FileTable>
                <colgroup>
                    <col width="274" />
                    <col width="144" />
                    <col width="120" />
                    <col width="80" />
                </colgroup>
                <thead>
                    <tr>
                        <th>Name<Chevron dir="up" color="#9b9b9b" size={9} width={1} /></th>
                        <th>Date modified</th>
                        <th>Type</th>
                        <th>Size</th>
                    </tr>
                </thead>
                <tbody>
                    {folders.map(f=>(
                        <tr key={f}>
                            <td><FileName><FolderIcon />{f}</FileName></td>
                            <td>4/3/2026 3:45 PM</td>
                            <td>File folder</td>
                            <td />
                        </tr>
                    ))}
                </tbody>
            </FileTable>
        </Browser>
        <SaveFields>
            <label htmlFor="fname">File name:</label>
            <SaveField>
                <input id="fname" defaultValue="Freelance Agency Revenue" />
                <Chevron size={11} color="#c6c6c6" width={1} />
            </SaveField>
            <label htmlFor="ftype">Save as type:</label>
            <SaveField $dark>
                <select id="ftype"><option>PDF</option></select>
                <Chevron size={11} color="#c6c6c6" width={1} />
            </SaveField>
        </SaveFields>
        <PublishOptions>
            <label>
                <TickBox><input type="checkbox" defaultChecked /><Tick size={11} /></TickBox>
                <span>Open file after<br />publishing</span>
            </label>
            <OptimizeLabel>Optimize for:</OptimizeLabel>
            <OptimizeChoices>
                <label><input type="radio" name="optimize" defaultChecked /><span>Standard (publishing<br />online and printing)</span></label>
                <label><input type="radio" name="optimize" /><span>Minimum size<br />(publishing online)</span></label>
            </OptimizeChoices>
        </PublishOptions>
        <OptionsRow>
            <DarkButton $width={133} $height={24}>Options...</DarkButton>
        </OptionsRow>
        <PublishFooter>
            <Command className="hide" $inner={7}><Chevron dir="up" size={10} color="#c6c6c6" width={1.8} />Hide Folders</Command>
            <Command $gap={15} $inner={14}>Tools <Triangle w={8} color="#dedede" /></Command>
            <Command $gap={12} as="span"><DarkButton $strong $width={88} $height={26}>Publish</DarkButton></Command>
            <DarkButton $strong $width={88} $height={26}>Cancel</DarkButton>
        </PublishFooter>
        <Grip width="8" height="8" viewBox="0 0 8 8" fill="#c6c6c6">
            <path d="M6 0h2v2H6zM3 3h2v2H3zM6 3h2v2H6zM0 6h2v2H0zM3 6h2v2H3zM6 6h2v2H6z" />
        </Grip>
    </Publish>
)

const CheckChoice=({ checked, children })=>(
    <Choice>
        <CheckWrap>
            <input type="checkbox" defaultChecked={checked} />
            {checked && <Tick size={13} />}
        </CheckWrap>
        <span>{children}</span>
    </Choice>
)

const PageSpin=({ id })=>(
    <Spin>
        <input id={id} defaultValue="1" disabled />
        <SpinButtons>
            <button disabled aria-label="Increase"><Triangle w={5} dir="up" color="black" /></button>
            <button disabled aria-label="Decrease"><Triangle w={5} color="#666666" /></button>
        </SpinButtons>
    </Spin>
)

const OptionsDialog=()=>(
    <Options role="dialog" aria-label="Options">
        <OptionsTitle>
            <span>Options</span>
            <IconButton aria-label="Help">?</IconButton>
            <IconButton aria-label="Close"><Cross /></IconButton>
        </OptionsTitle>
        <OptionsBody>
            <Section $gap={7}>
                <SectionTitle>Page range</SectionTitle>
                <Choices>
                    <Choice><input type="radio" name="range" defaultChecked /><span className="focus"><u>A</u>ll</span></Choice>
                    <PageRow>
                        <Choice><input type="radio" name="range" /><span>Pa<u>g</u>e(s)</span></Choice>
                        <PageLabel htmlFor="from" $gap={11} $width={38}>From:</PageLabel>
                        <PageSpin id="from" />
                        <PageLabel htmlFor="to" $gap={9} $width={25}>To:</PageLabel>
                        <PageSpin id="to" />
                    </PageRow>
                </Choices>
            </Section>
            <Section>
                <SectionTitle>Publish what</SectionTitle>
                <Choices $two>
                    <Choice><input type="radio" name="what" /><span><u>S</u>election</span></Choice>
                    <Choice><input type="radio" name="what" /><span><u>E</u>ntire workbook</span></Choice>
                    <Choice><input type="radio" name="what" defaultChecked /><span>Acti<u>v</u>e sheet(s)</span></Choice>
                    <Choice $off><input type="radio" name="what" disabled /><span>Table</span></Choice>
                    <CheckChoice>Ign<u>o</u>re print areas</CheckChoice>
                </Choices>
            </Section>
            <Section>
                <SectionTitle>Include non-printing information</SectionTitle>
                <Choices>
                    <CheckChoice checked>Document p<u>r</u>operties</CheckChoice>
                    <CheckChoice checked>Docu<u>m</u>ent structure tags for accessibility</CheckChoice>
                </Choices>
            </Section>
            <Section>
                <SectionTitle>PDF options</SectionTitle>
                <Choices>
                    <CheckChoice>PDF<u>/</u>A compliant</CheckChoice>
                </Choices>
            </Section>
            <OptionsButtons>
                <LightButton $primary>OK</LightButton>
                <LightButton>Cancel</LightButton>
            </OptionsButtons>
        </OptionsBody>
    </Options>
)

const App = () => {
  return (
    <>
        <GlobalStyle />
        <Page>
            <Header />
            <RibbonBar />
            <FormulaRow>
                <FormulaBox>
                    <input aria-label="Formula" />
                    <Chevron size={8} color="#ababab" width={2} />
                </FormulaBox>
            </FormulaRow>
            <Spreadsheet />
            <SheetTabs />
            <Status />
        </Page>
        <PublishDialog />
        <OptionsDialog />
    </>
  );
}

export default App;
